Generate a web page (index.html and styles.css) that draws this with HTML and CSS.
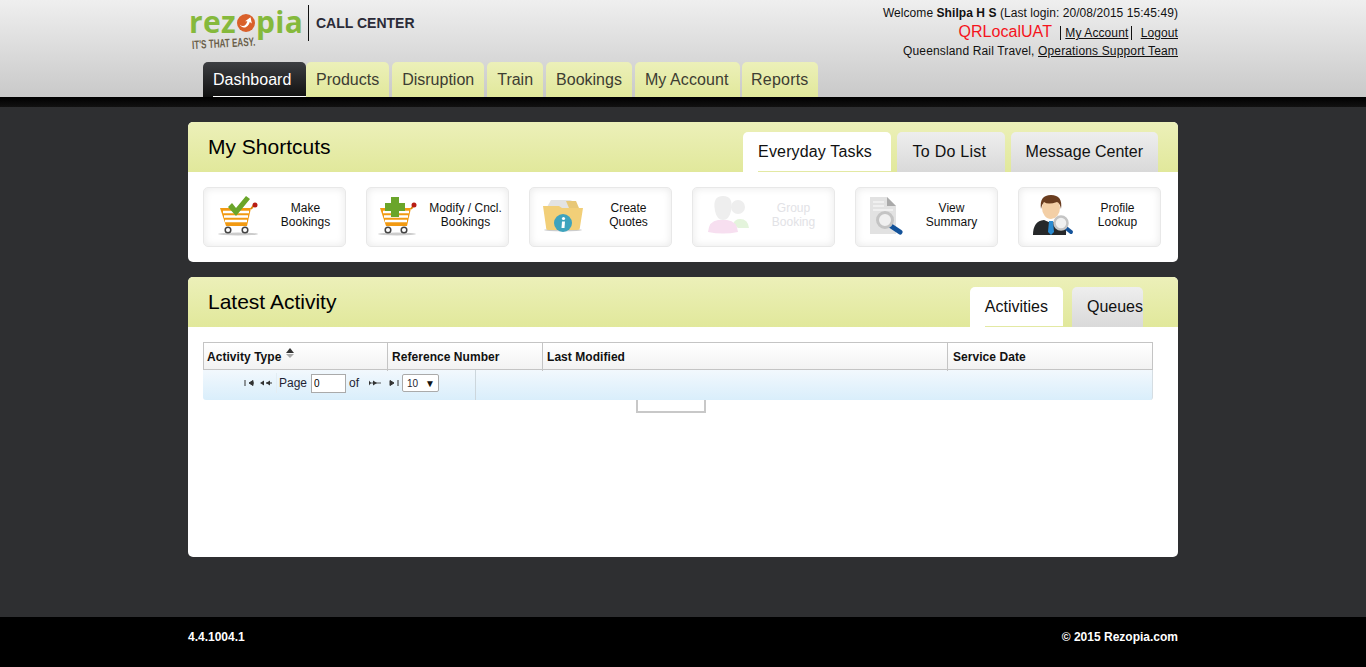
FILE: index.html
```html
<!DOCTYPE html>
<html lang="en">
<head>
  <meta charset="UTF-8" />
  <title>Dashboard</title>
  <link rel="stylesheet" href="styles.css">
</head>
<body>

  <header class="top">
    <div class="wrap top-row">
      <div class="brand">
        <div class="logo">
          <div class="logo-word">
            <span>rez</span><svg class="logo-o" viewBox="0 0 20 20"><circle cx="10" cy="10" r="10" fill="#d9602a"/><path d="M3 12 C7 15 10 13 11.500 8 L9 8 L15 3.500 L16.500 10.500 L14.200 8.800 C13 14 7 18 3 12Z" fill="#fff"/></svg><span>pia</span>
          </div>
          <div class="logo-tag">IT'S THAT EASY.</div>
        </div>
        <div class="call-center">CALL CENTER</div>
      </div>
      <div class="user-info">
        <div class="line-welcome">Welcome <b>Shilpa H S</b> (Last login: 20/08/2015 15:45:49)</div>
        <div class="user-links">
          <span class="env">QRLocalUAT</span>
          <a href="#" class="link-first">My Account</a>
          <a href="#" class="link-last">Logout</a>
        </div>
        <div class="line-org">Queensland Rail Travel, <a href="#">Operations Support Team</a></div>
      </div>
    </div>
    <nav class="wrap main-nav">
      <a href="#" class="active">Dashboard</a>
      <a href="#">Products</a>
      <a href="#">Disruption</a>
      <a href="#">Train</a>
      <a href="#">Bookings</a>
      <a href="#" class="nav-account">My Account</a>
      <a href="#" class="nav-reports">Reports</a>
    </nav>
  </header>
  <div class="black-bar"></div>

  <main class="wrap content">
    <section class="panel">
      <div class="panel-head">
        <h2>My Shortcuts</h2>
        <div class="tabs">
          <a href="#" class="active tab-everyday">Everyday Tasks</a>
          <a href="#" class="tab-todo">To Do List</a>
          <a href="#">Message Center</a>
        </div>
      </div>
      <div class="shortcuts">
        <a href="#" class="shortcut">
          <svg class="ico" viewBox="0 0 42 42">
            <ellipse cx="20" cy="38" rx="20" ry="1.500" fill="#ccc"/>
            <path d="M2 12 H33 L29 30 H8Z" fill="#f29a12"/>
            <path d="M5 16 H31 M6 20.500 H30 M7 25 H29" stroke="#fff" stroke-width="2.400"/>
            <path d="M33 13 L36 9" stroke="#d98a10" stroke-width="2"/>
            <circle cx="37" cy="9" r="2.500" fill="#b81c14"/>
            <circle cx="10" cy="34" r="2.800" fill="#fff" stroke="#444" stroke-width="1.500"/>
            <circle cx="27" cy="34" r="2.800" fill="#fff" stroke="#444" stroke-width="1.500"/>
            <path d="M10 11 L14 7 L18 12 L28 0 L32 3 L18 20Z" fill="#6aa52a"/>
          </svg>
          <span class="label-make">Make<br>Bookings</span>
        </a>
        <a href="#" class="shortcut">
          <svg class="ico" viewBox="0 0 42 42">
            <ellipse cx="16" cy="38" rx="19" ry="1.500" fill="#ccc"/>
            <path d="M-1 12 H30 L26 30 H5Z" fill="#f29a12"/>
            <path d="M2 16 H28 M3 20.500 H27 M4 25 H26" stroke="#fff" stroke-width="2.400"/>
            <path d="M30 13 L33 9" stroke="#d98a10" stroke-width="2"/>
            <circle cx="33" cy="9" r="2.500" fill="#b81c14"/>
            <circle cx="7" cy="34" r="2.800" fill="#fff" stroke="#444" stroke-width="1.500"/>
            <circle cx="23" cy="34" r="2.800" fill="#fff" stroke="#444" stroke-width="1.500"/>
            <path d="M10 1 H18 V7 H24 V15 H18 V21 H10 V15 H4 V7 H10Z" fill="#6aa52a"/>
          </svg>
          <span>Modify / Cncl.<br>Bookings</span>
        </a>
        <a href="#" class="shortcut">
          <svg class="ico" viewBox="0 0 42 42">
            <ellipse cx="19" cy="34" rx="19" ry="1.300" fill="#ccc"/>
            <path d="M3 11 L7 4 H26 L31 6 L34 13 H3Z" fill="#e3e3e3"/>
            <path d="M22 5 H32 L35 12 H25Z" fill="#e8c877"/>
            <path d="M-1 10 H15 L18 12 H39 L36 31 Q36 34 33 34 H4 Q2 34 2 31Z" fill="#f2cf78"/>
            <circle cx="19" cy="27" r="9" fill="#3ea3bd"/>
            <circle cx="19.500" cy="22.500" r="1.600" fill="#fff"/>
            <path d="M18 25.500 H21 L20.500 32 H17.500Z" fill="#fff"/>
          </svg>
          <span>Create<br>Quotes</span>
        </a>
        <a href="#" class="shortcut disabled">
          <svg class="ico" viewBox="0 0 42 42">
            <path d="M26 28 Q28 23 33 23 Q41 23 42 32 H31Z" fill="#e4f4dc"/>
            <circle cx="31" cy="11" r="7" fill="#eee"/>
            <path d="M1 36 Q2 25 11 24 H20 Q30 25 31 36 Q16 39 1 36Z" fill="#f7dff0"/>
            <path d="M8 15 Q5 0 16 0 Q27 0 24 15 Q22 24 16 24 Q10 24 8 15Z" fill="#eee"/>
          </svg>
          <span class="label-group">Group<br>Booking</span>
        </a>
        <a href="#" class="shortcut">
          <svg class="ico" viewBox="0 0 42 42">
            <path d="M0 1 H17 L26 10 V38 H0Z" fill="#e2e2e2"/>
            <path d="M17 1 L26 10 H17Z" fill="#aaa"/>
            <path d="M3 6 H14 M3 10 H14 M3 14 H23" stroke="#f5f5f5" stroke-width="1.500"/>
            <path d="M21 30 L30 36" stroke="#14539a" stroke-width="5" stroke-linecap="round"/>
            <circle cx="15" cy="24" r="7.500" fill="#f0f0f0" stroke="#c4c4c4" stroke-width="3"/>
          </svg>
          <span class="label-view">View<br>Summary</span>
        </a>
        <a href="#" class="shortcut">
          <svg class="ico" viewBox="0 0 42 42">
            <path d="M0 39 Q0 25 11 24 L18 27 L25 24 Q34 26 33 39Z" fill="#26282a"/>
            <path d="M16 25 H20 L21 36 L18 39 L15 36Z" fill="#2a8ad0"/>
            <ellipse cx="18" cy="12" rx="9" ry="11" fill="#f3cfa6"/>
            <path d="M8 13 Q6 -1 18 -1 Q30 -1 28 13 Q27 7 24 6 Q15 9 11 6 Q9 8 8 13Z" fill="#6a3d1f"/>
            <path d="M33 32 L38 36" stroke="#14539a" stroke-width="4" stroke-linecap="round"/>
            <circle cx="28" cy="27" r="6.500" fill="#f0f0f0" stroke="#c4c4c4" stroke-width="2.500"/>
          </svg>
          <span>Profile<br>Lookup</span>
        </a>
      </div>
    </section>

    <section class="panel panel-activity">
      <div class="panel-head">
        <h2>Latest Activity</h2>
        <div class="tabs tabs-activity">
          <a href="#" class="active">Activities</a>
          <a href="#" class="tab-clipped">Queues</a>
        </div>
      </div>
      <div class="activity-body">
        <div class="grid">
          <div class="grid-head">
            <div class="col-type">Activity Type <span class="sort"><i class="up"></i><i class="down"></i></span></div>
            <div>Reference Number</div>
            <div>Last Modified</div>
            <div class="col-date">Service Date</div>
          </div>
          <div class="pager">
            <div class="pager-left">
              <svg class="pg-btn" viewBox="0 0 10 6"><path d="M1 0 V6 M5 3 L9 0.500 V5.500Z" stroke="#333" fill="#333"/><path d="M6 3 H10" stroke="#333"/></svg>
              <svg class="pg-btn pg-wide" viewBox="0 0 12 6"><path d="M0 3 L4 0.500 V5.500Z M6 3 L10 0.500 V5.500Z" fill="#333"/><path d="M6 3 H12" stroke="#333"/></svg>
              <span class="pg-label">Page</span>
              <input type="text" value="0" class="pg-input">
              <span class="pg-of">of</span>
              <svg class="pg-btn pg-wide" viewBox="0 0 12 6"><path d="M8 3 L4 0.500 V5.500Z" fill="#333"/><path d="M2 3 L0 0.500 V5.500Z" fill="#333"/><path d="M0 3 H12" stroke="#333" stroke-width="0.800"/></svg>
              <svg class="pg-btn" viewBox="0 0 10 6"><path d="M9 0 V6 M5 3 L1 0.500 V5.500Z" stroke="#333" fill="#333"/></svg>
              <span class="pg-select">10 <em>▼</em></span>
            </div>
          </div>
        </div>
        <div class="loading-box"></div>
      </div>
    </section>
  </main>

  <footer class="bottom">
    <div class="wrap bottom-row">
      <span>4.4.1004.1</span>
      <span>© 2015 Rezopia.com</span>
    </div>
  </footer>

</body>
</html>
```

FILE: styles.css
```css
body {
  font-family: "Liberation Sans", Arial, sans-serif;
  background: #2e2f31;
  margin: 0;
  height: 667px;
  overflow: hidden;
  display: flex;
  flex-direction: column;
  color: #111;
}

a {
  color: inherit;
}

.wrap {
  width: 990px;
  margin: 0 auto;
}

/* header */
.top {
  height: 97px;
  background: linear-gradient(#efefef, #c9c9c9);
  display: flex;
  flex-direction: column;
}

.top-row {
  display: flex;
  justify-content: space-between;
  height: 62px;
}

.brand {
  display: flex;
  align-items: flex-start;
  padding: 5px 0 0 1px;
}

.logo {
  width: 119px;
}

.logo-word {
  display: flex;
  align-items: center;
  height: 32px;
  font-family: "Open Sans", sans-serif;
  font-weight: 700;
  font-size: 30px;
  letter-spacing: 0.3px;
  color: #85b93c;
}

.logo-o {
  width: 18px;
  height: 18px;
  margin: 4px 1px 0;
  flex: none;
}

.logo-tag {
  font-size: 12px;
  font-weight: bold;
  color: #6b5f4a;
  margin: 1px 0 0 3px;
  transform: rotate(-3deg) scaleX(0.675);
  transform-origin: left center;
  white-space: nowrap;
}

.call-center {
  border-left: 1px solid #111;
  height: 36px;
  line-height: 36px;
  padding-left: 7px;
  font-size: 14px;
  font-weight: bold;
  color: #2b2b38;
  white-space: nowrap;
}

.user-info {
  text-align: right;
  font-size: 12px;
  padding-top: 6px;
  line-height: 14px;
}

.line-welcome {
  letter-spacing: 0.06px;
}

.line-org {
  letter-spacing: 0.15px;
  margin-top: -1px;
}

.user-links {
  height: 22px;
  margin: 1px 0 2px;
  line-height: 22px;
}

.env {
  font-size: 16px;
  color: #f5141c;
  margin-right: 5px;
  letter-spacing: 0.05px;
}

.link-first {
  border-left: 1px solid #111;
  padding-left: 4px;
  padding-right: 3px;
  border-right: 1px solid #111;
  margin-right: 5px;
  letter-spacing: 0.1px;
}

.link-last {
  letter-spacing: 0.1px;
}

.main-nav {
  display: flex;
  align-items: stretch;
  height: 35px;
  box-sizing: border-box;
  padding-left: 15px;
}

.main-nav a {
  background: linear-gradient(#ecf0b9, #e1e89b);
  border-radius: 5px 5px 0 0;
  color: #3d3d32;
  text-decoration: none;
  font-size: 16px;
  line-height: 36px;
  padding: 0 10.250px;
  margin-right: 2.500px;
}

.main-nav a.nav-account {
  letter-spacing: 0.1px;
  padding-right: 11px;
  margin-right: 2px;
}

.main-nav a.nav-reports {
  letter-spacing: 0.2px;
  padding: 0 9.500px;
}

.main-nav a.active {
  background: linear-gradient(#3d3f42, #111);
  color: #fff;
  margin-right: 0;
  padding: 0 14.500px 0 10px;
  position: relative;
}

.main-nav a.active::after {
  content: "";
  position: absolute;
  left: 10px;
  right: 0;
  bottom: 0;
  height: 1px;
  background: #fff;
}

.black-bar {
  height: 10px;
  background: linear-gradient(#000, #111);
}

/* panels */
.content {
  flex: 1;
  padding-top: 15px;
}

.panel {
  background: #fff;
  border-radius: 5px;
  overflow: hidden;
  height: 140px;
}

.panel-activity {
  height: 280px;
  margin-top: 15px;
}

.panel-head {
  height: 50px;
  background: linear-gradient(#ecf0b9, #e1e89b);
  display: flex;
  justify-content: space-between;
  align-items: flex-end;
  padding: 0 20px;
}

h2 {
  margin: 0;
  align-self: flex-start;
  font-weight: normal;
  font-size: 21px;
  line-height: 50px;
  color: #000;
}

.tabs {
  display: flex;
  gap: 6px;
}

.tabs a {
  background: linear-gradient(#eee, #d9d9d9);
  border-radius: 5px 5px 0 0;
  height: 40px;
  box-sizing: border-box;
  line-height: 39px;
  padding: 0 15px;
  font-size: 16px;
  text-decoration: none;
  color: #111;
}

.tabs a.active {
  background: #fff;
  position: relative;
}

.tabs a.active::after {
  content: "";
  position: absolute;
  left: 15px;
  right: 0;
  bottom: 0;
  height: 1px;
  background: #e3e9a3;
}

.tabs a.tab-everyday {
  width: 148px;
  letter-spacing: 0.15px;
  padding-left: 15.500px;
}

.tabs a.tab-todo {
  width: 108px;
  letter-spacing: 0.25px;
  padding-left: 16px;
}

.tabs-activity {
  gap: 9px;
  margin-right: 15px;
}

.tabs a.tab-clipped {
  padding-right: 0;
}

/* shortcut buttons */
.shortcuts {
  display: flex;
  gap: 20px;
  padding: 15px;
}

.shortcut {
  width: 143px;
  height: 60px;
  box-sizing: border-box;
  border: 1px solid #e8e8e8;
  border-radius: 5px;
  box-shadow: inset 0 0 8px #e8e8e8;
  background: #fff;
  display: flex;
  align-items: center;
  text-decoration: none;
  font-size: 12px;
  line-height: 14px;
  color: #111;
  text-align: center;
  padding: 0 0 4px 14px;
}

.shortcut span {
  flex: 1;
}

.shortcut .label-make {
  padding-left: 6px;
}

.shortcut .label-group {
  padding-left: 4px;
}

.shortcut .label-view {
  padding-right: 6px;
}

.ico {
  width: 42px;
  height: 42px;
  flex: none;
  overflow: visible;
  margin-top: 4px;
}

.shortcut.disabled {
  color: #e2e2e6;
}

/* activity grid */
.activity-body {
  padding: 15px 25px 0 15px;
}

.grid-head {
  display: grid;
  grid-template-columns: 184px 155px 405px 1fr;
  height: 28px;
  box-sizing: border-box;
  border: 1px solid #c4c4c4;
  background: linear-gradient(#fff, #f2f2f2);
  font-size: 12px;
  font-weight: bold;
  line-height: 28px;
  letter-spacing: 0.05px;
}

.grid-head div {
  padding-left: 4px;
  border-right: 1px solid #c4c4c4;
}

.grid-head .col-type {
  padding-left: 3px;
}

.grid-head .col-date {
  border-right: 0;
  padding-left: 5px;
}

.sort {
  display: inline-block;
  width: 10px;
  height: 10px;
  vertical-align: 3px;
  margin-left: 1px;
}

.sort i {
  display: block;
  width: 0;
  height: 0;
  border-left: 4px solid transparent;
  border-right: 4px solid transparent;
}

.sort .up {
  border-bottom: 5px solid #333;
  margin-bottom: 1px;
}

.sort .down {
  border-top: 4px solid #aaa;
}

.pager {
  height: 30px;
  box-sizing: border-box;
  background: linear-gradient(#f2f8fd, #d9eefb);
  border-right: 1px solid #d5dde2;
  border-radius: 0 0 3px 3px;
  font-size: 12px;
  color: #1f1f33;
}

.pager-left {
  width: 273px;
  height: 30px;
  box-sizing: border-box;
  padding: 0 0 4px 41px;
  border-right: 1px solid #ccd6dc;
  display: flex;
  align-items: center;
}

.pg-btn {
  width: 10px;
  height: 6px;
  flex: none;
}

.pg-wide {
  width: 12px;
  margin-left: 6px;
}

.pg-label {
  margin-left: 4px;
  padding-left: 2px;
  border-left: 1px solid #e3edf3;
  line-height: 20px;
}

.pg-input {
  width: 35px;
  height: 19px;
  box-sizing: border-box;
  padding: 0 2px;
  margin: 0 0 0 4px;
  border: 1px solid #aaa;
  font-family: inherit;
  font-size: 10px;
  background: #fff;
}

.pg-of {
  margin: 0 10px 0 3px;
  line-height: 20px;
}

.pg-of + .pg-wide {
  margin-left: 0;
}

.pg-wide + .pg-btn {
  margin-left: 8px;
}

.pg-select {
  width: 37px;
  height: 18px;
  margin-left: 3px;
  box-sizing: border-box;
  border: 1px solid #aaa;
  border-radius: 2px;
  background: #fff;
  font-size: 10px;
  line-height: 17px;
  padding-left: 4px;
  white-space: nowrap;
}

.pg-select em {
  font-style: normal;
  margin-left: 4px;
  color: #111;
}

.loading-box {
  width: 70px;
  height: 13px;
  box-sizing: border-box;
  margin-left: 433px;
  border: 2px solid #c8c8c8;
  border-top: 0;
}

/* footer */
.bottom {
  height: 50px;
  background: #000;
  color: #fff;
  font-size: 12px;
  font-weight: bold;
}

.bottom-row {
  display: flex;
  justify-content: space-between;
  line-height: 41px;
}
```
